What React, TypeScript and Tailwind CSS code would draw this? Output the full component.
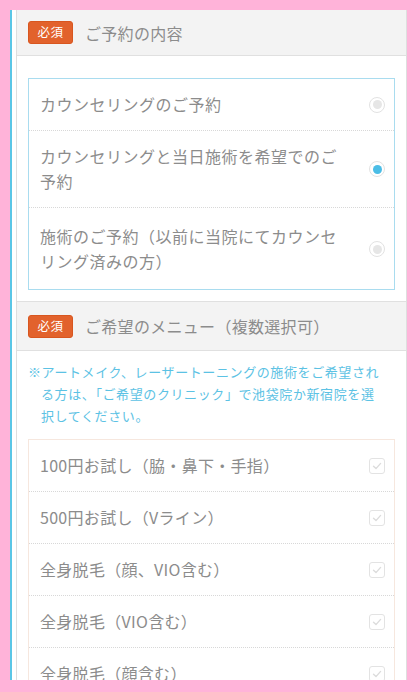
import React from "react";

const font = { fontFamily: '"Noto Sans CJK JP", "Noto Sans", sans-serif' };

function Badge() {
  return (
    <span className="flex h-[23px] w-[45px] shrink-0 items-center justify-center rounded-[3px] border border-[#d8561f] bg-[#e2622c] text-[12.5px] leading-none tracking-[0.5px] text-white">
      必須
    </span>
  );
}

function Radio({ checked }: { checked?: boolean }) {
  return (
    <span className="flex h-[16px] w-[16px] shrink-0 items-center justify-center rounded-full border-[1.5px] border-[#e2e2e2] bg-white">
      <span className={checked ? "h-[9px] w-[9px] rounded-full bg-[#4bbde6]" : "h-[9px] w-[9px] rounded-full bg-[#e6e6e6]"} />
    </span>
  );
}

function Check() {
  return (
    <span className="flex h-[16px] w-[16px] shrink-0 items-center justify-center rounded-[3px] border border-[#e3e3e3] bg-white">
      <svg width="10" height="10" viewBox="0 0 10 10" fill="none">
        <path d="M1.5 5.2 L4 7.6 L8.6 2.4" stroke="#dcdcdc" strokeWidth="1.4" strokeLinecap="round" strokeLinejoin="round" />
      </svg>
    </span>
  );
}

const radios = [
  { label: "カウンセリングのご予約", checked: false, cls: "py-[13px]" },
  { label: "カウンセリングと当日施術を希望でのご予約", checked: true, cls: "py-[13px]" },
  { label: "施術のご予約（以前に当院にてカウンセリング済みの方）", checked: false, cls: "pt-[16px] pb-[15px]" },
];

const menus = [
  "100円お試し（脇・鼻下・手指）",
  "500円お試し（Vライン）",
  "全身脱毛（顔、VIO含む）",
  "全身脱毛（VIO含む）",
  "全身脱毛（顔含む）",
  "全身脱毛",
];

export default function App() {
  return (
    <div className="h-[692px] w-[420px] bg-[#ffb3d9] pb-[12px] pl-[10px] pr-[13px] pt-[10px]" style={font}>
      <div className="h-[670px] overflow-hidden border-l-[2px] border-[#5ac6e6] bg-white pl-[4px]">
        <div className="h-full border-x border-[#dedede] bg-white">
          {/* Section 1 header */}
          <div className="flex h-[46px] items-center gap-[12px] border-b border-[#e0e0e0] bg-[#f3f3f3] pl-[11px]">
            <Badge />
            <span className="text-[16px] tracking-[0.3px] text-[#8c8c8c]">ご予約の内容</span>
          </div>
          {/* Section 1 body */}
          <div className="px-[11px] pb-[11px] pt-[22px]">
            <div className="border border-[#a9dcef]">
              {radios.map((r, i) => (
                <div
                  key={i}
                  className={`flex items-center justify-between gap-[20px] pl-[11px] pr-[9px] ${r.cls} ${i < radios.length - 1 ? "border-b border-dotted border-[#d8d8d8]" : ""}`}
                >
                  <span className="text-[16px] leading-[25px] tracking-[0.5px] text-[#8c8c8c]">{r.label}</span>
                  <Radio checked={r.checked} />
                </div>
              ))}
            </div>
          </div>
          {/* Section 2 header */}
          <div className="flex h-[50px] items-center gap-[12px] border-y border-[#e0e0e0] bg-[#f3f3f3] pl-[11px]">
            <Badge />
            <span className="text-[16px] tracking-[0.3px] text-[#8c8c8c]">ご希望のメニュー（複数選択可）</span>
          </div>
          {/* Section 2 body */}
          <div className="px-[11px] pt-[10px]">
            <p className="whitespace-nowrap pl-[13px] -indent-[13px] text-[13px] leading-[22px] tracking-[0.6px] text-[#5cc2e4]">
              ※アートメイク、レーザートーニングの施術をご希望され
              <br />
              る方は、「ご希望のクリニック」で池袋院か新宿院を選
              <br />
              択してください。
            </p>
            <div className="mt-[12px] border border-[#f6e7de]">
              {menus.map((m, i) => (
                <div
                  key={i}
                  className="flex items-center justify-between border-b border-dotted border-[#d8d8d8] py-[13px] pl-[11px] pr-[9px]"
                >
                  <span className="text-[16px] leading-[25px] tracking-[0.3px] text-[#8c8c8c]">{m}</span>
                  <Check />
                </div>
              ))}
            </div>
          </div>
        </div>
      </div>
    </div>
  );
}
